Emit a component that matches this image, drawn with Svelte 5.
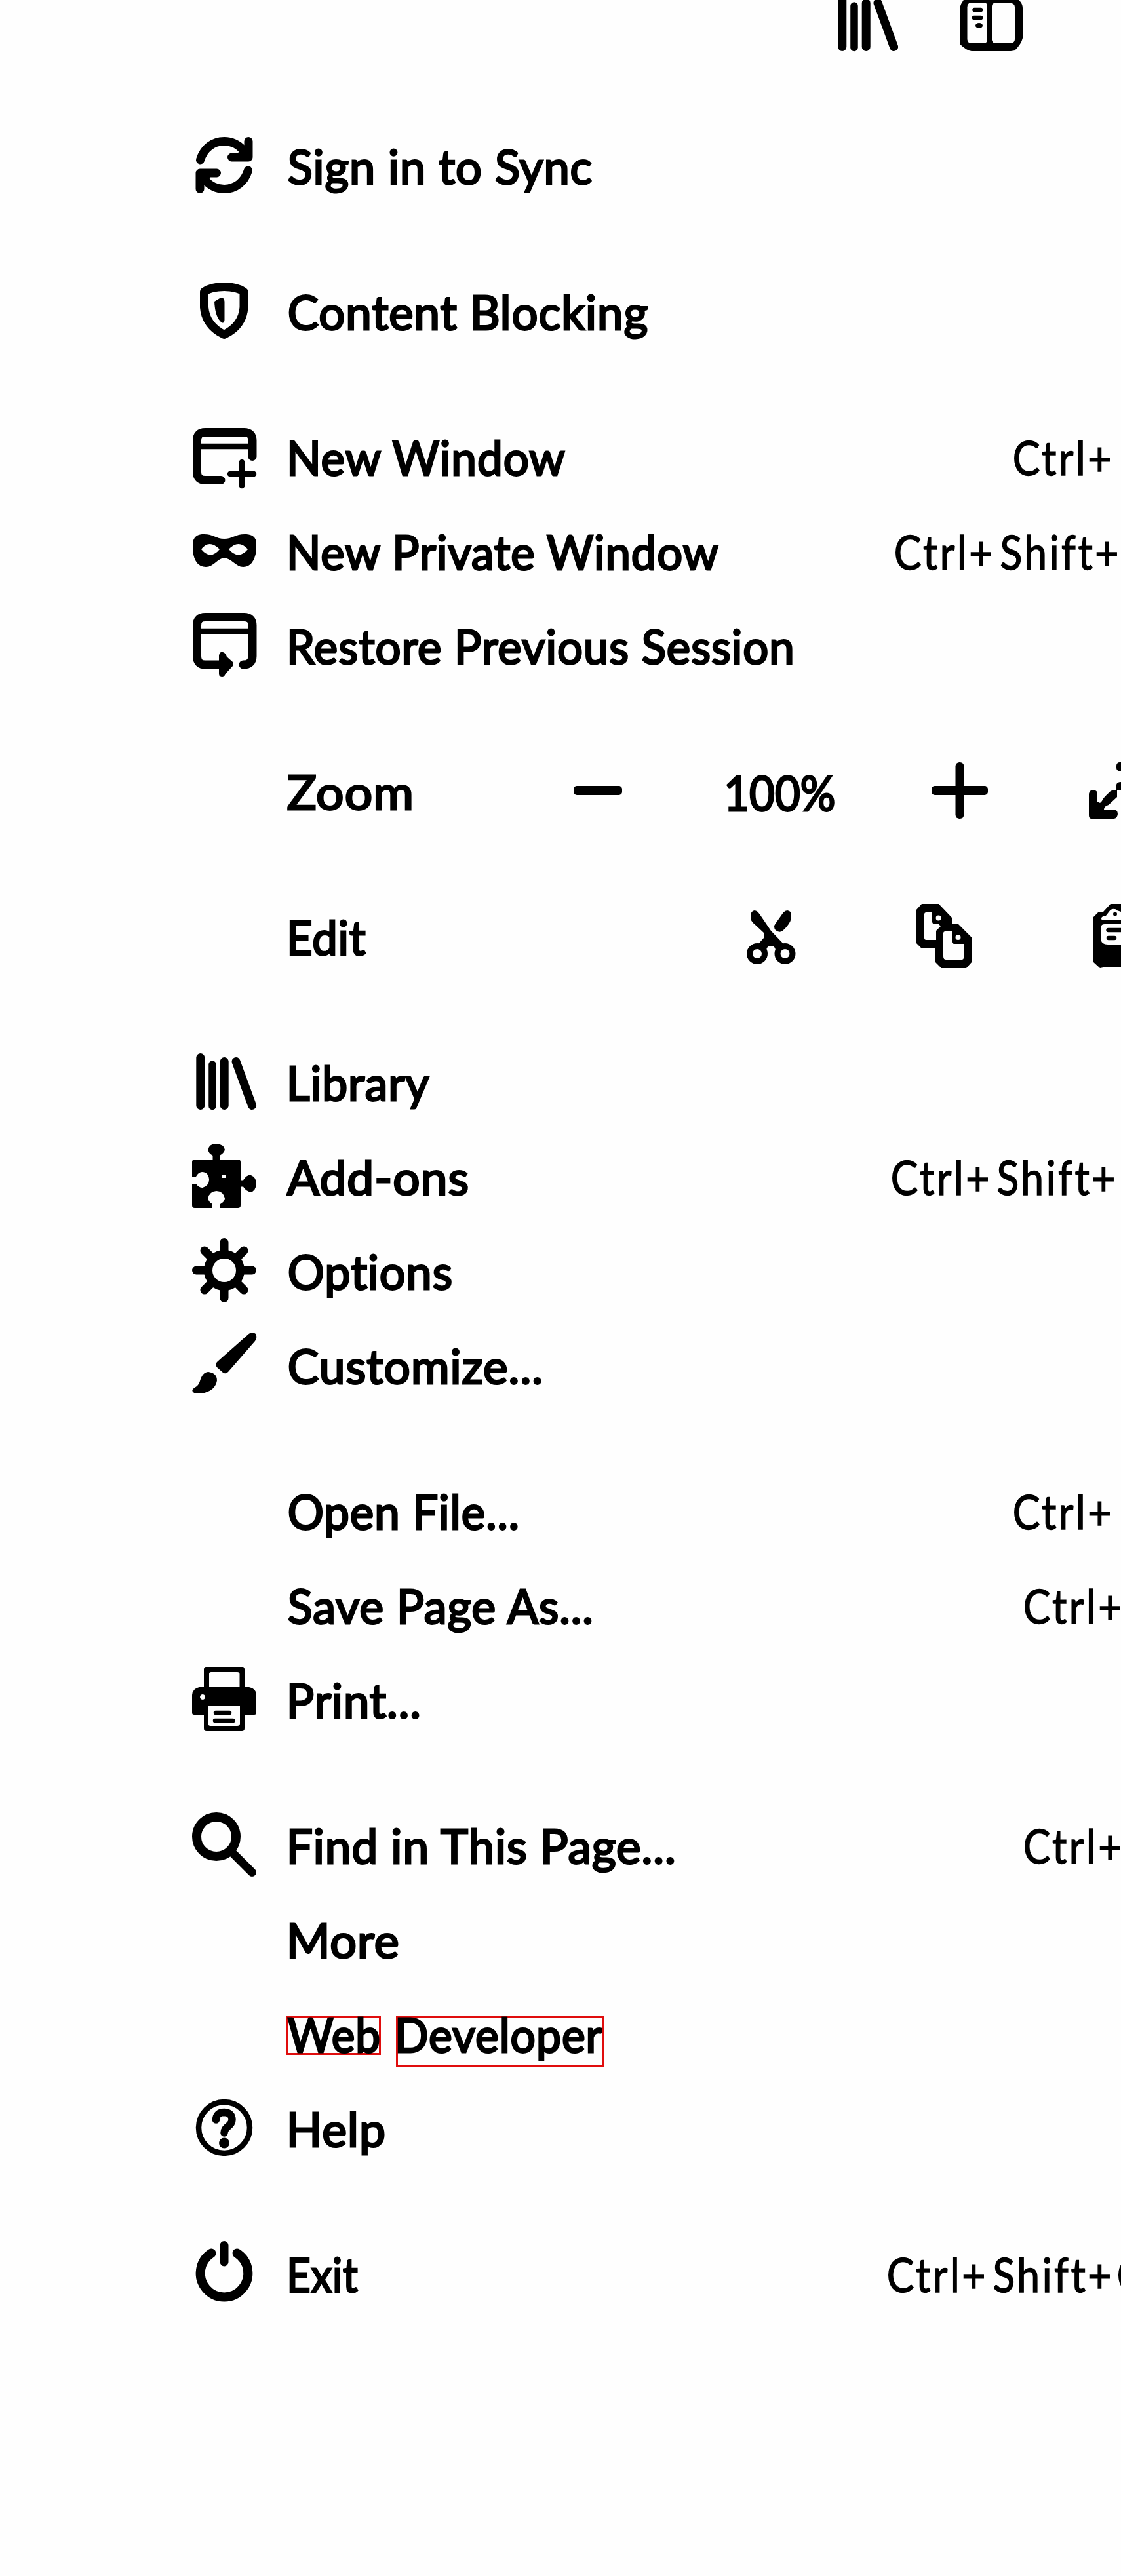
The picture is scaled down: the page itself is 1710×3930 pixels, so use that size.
<script>
  // Each entry: icon name, label, label ink span [start, end] and an optional
  // shortcut (list of { text, from, to }), all measured from the label column.
  const LABEL_X = 437;
  const span = (from, to) => [from - LABEL_X, to - LABEL_X];
  const ctrl = (x) => [{ text: 'Ctrl+', from: x, to: x + 146 }];
  const ctrlShift = (x) => [
    { text: 'Ctrl+', from: x, to: x + 146 },
    { text: 'Shift+', from: x + 161, to: x + 338 }
  ];

  const groups = [
    [{ icon: 'sync', label: 'Sign in to Sync', ink: span(440, 903) }],
    [{ icon: 'shield', label: 'Content Blocking', ink: span(441, 988) }],
    [
      { icon: 'window', label: 'New Window', ink: span(442, 864), keys: ctrl(1547) },
      { icon: 'mask', label: 'New Private Window', ink: span(442, 1098), keys: ctrlShift(1366) },
      { icon: 'restore', label: 'Restore Previous Session', ink: span(442, 1208) }
    ],
    [{ kind: 'zoom', label: 'Zoom', ink: span(438, 627) }],
    [{ kind: 'edit', label: 'Edit', ink: span(442, 558) }],
    [
      { icon: 'library', label: 'Library', ink: span(442, 655) },
      { icon: 'addons', label: 'Add-ons', ink: span(437, 713), keys: ctrlShift(1361) },
      { icon: 'options', label: 'Options', ink: span(441, 688) },
      { icon: 'brush', label: 'Customize...', ink: span(441, 825) }
    ],
    [
      { label: 'Open File...', ink: span(441, 789), keys: ctrl(1547) },
      { label: 'Save Page As...', ink: span(440, 904), keys: ctrl(1563) },
      { icon: 'print', label: 'Print...', ink: span(442, 639) }
    ],
    [
      { icon: 'find', label: 'Find in This Page...', ink: span(442, 1030), keys: ctrl(1563) },
      { label: 'More', ink: span(442, 607) },
      { kind: 'web', label: 'Web Developer' },
      { icon: 'help', label: 'Help', ink: span(442, 586) }
    ],
    [
      {
        icon: 'power',
        label: 'Exit',
        ink: span(442, 546),
        keys: [...ctrlShift(1355), { text: 'Q', from: 1706, to: 1752 }]
      }
    ]
  ];

  // Scales a text run horizontally so that its ink covers the given span.
  function fit(node, [from, to]) {
    const cs = getComputedStyle(node);
    const pen = parseFloat(cs.webkitTextStrokeWidth) || 0;
    const ctx = document.createElement('canvas').getContext('2d');
    ctx.font = `${cs.fontWeight} ${cs.fontSize} ${cs.fontFamily}`;
    ctx.letterSpacing = cs.letterSpacing === 'normal' ? '0px' : cs.letterSpacing;
    const m = ctx.measureText(node.textContent);
    const spacing = parseFloat(cs.letterSpacing) || 0;
    const left = -m.actualBoundingBoxLeft - pen / 4;
    // The advance carries one trailing letter space; the ink box does not.
    const right = Math.min(m.actualBoundingBoxRight, m.width - spacing) + pen / 4;
    const scale = (to - from) / (right - left);
    node.style.setProperty('--sx', scale);
    node.style.setProperty('--dx', `${from - left * scale}px`);
  }
</script>

{#snippet bars()}
  <g class="line w13"><path d="M11.8 11.5V84.5M48.2 17.5V84.5M66 17.5L90.6 84.5" /></g>
  <path class="line w11" d="M30 22V85.5" />
{/snippet}

{#snippet icon(name)}
  <svg class="icon" viewBox="0 0 96 96" aria-hidden="true">
    {#if name === 'sync'}
      {#each ['', 'rotate(180 48 48)'] as turn}
        <g transform={turn}>
          <path class="line w13" d="M11.500 40C17 22 31 11.500 48 11.500C60 11.500 69 16 77 25" />
          <path class="line w13" d="M85 11.500V36H59.500" />
          <path d="M84 12V40H64L71 26Z" />
        </g>
      {/each}
    {:else if name === 'shield'}
      <path class="line w13" d="M17.500 19Q28 11.500 48 11.500Q67 11.500 78 19V43Q76 71 48 84.500Q20 71 17.500 43Z" />
      <path d="M33 34L42 28.500Q48 27 48.500 34V62Q48 68 44 66Q34 58 33 34Z" />
    {:else if name === 'window'}
      <path class="line w13" d="M91 48.500V24Q91 11.500 78 11.500H19Q6.500 11.500 6.500 24V72Q6.500 84.500 19 84.500H43" />
      <path class="line w8" d="M9 33H89M57 75H93M75 57V93" />
    {:else if name === 'mask'}
      <path fill-rule="evenodd" d="M0 36Q2 24 14 23C31 22 35 30 48 30C61 30 66 22 82 23Q96 24 97 36V48Q93 73 77 73C66 73 59 59.500 48 59.500C38 59.500 32 73 20 73Q3 73 0 48ZM13 46Q25 30 41 46Q27 63 13 46ZM55 46Q70 30 84 46Q70 63 55 46Z" />
    {:else if name === 'restore'}
      <path class="line w13" d="M77 78Q91 78 91 65V18Q91 5.500 78 5.500H19Q6.500 5.500 6.500 18V65Q6.500 78 19 78H45" />
      <path class="line w8" d="M9 27H89" />
      <path d="M40 64Q41 58 46 59Q50 60 52 66L61 74V80L50 92Q48 97 45 97Q40 97 40 92Z" />
    {:else if name === 'library'}
      {@render bars()}
    {:else if name === 'addons'}
      <path d="M3 23H30.500V17Q23.500 13 23.500 8Q25 -1 36 -1Q48 0 49 8Q48 13 41 17V23H69Q73 23 73 27V54.500H77Q82 46.500 88 46.500Q97 50 97 60Q96 72 88 72.500Q82 72 77 64.500H73V93Q73 97 69 97H42V91Q49 87 49 82Q46 71 36 71Q25 72 23.500 82Q24 88 30 91V97H3Q-1 97 -1 93V60H5Q9 66 15 66Q25 63 25 53.500Q24 42 14 42Q8 43 5 49H-1V27Q-1 23 3 23Z" />
      <path class="paper" d="M45 46h5v5h-5z" />
    {:else if name === 'options'}
      <circle class="line w13" cx="48" cy="48" r="24.500" />
      {#each [0, 45, 90, 135, 180, 225, 270, 315] as angle}
        <path class="line w13" d="M48 20V5.500" transform="rotate({angle} 48 48)" />
      {/each}
    {:else if name === 'brush'}
      <path d="M85.500 1Q91 -3 96 1Q99 7 95 12L54 59Q50 63 46 60L37 52Q33 47 38 43Z" />
      <path d="M2 91Q-4 87 3 83Q9 80 11 73Q15 59 24 59Q37 61 37 72Q35 86 18 91Z" />
    {:else if name === 'print'}
      <path fill-rule="evenodd" d="M20-1H76Q79-1 79 3V30H86Q97 32 97 42V69Q97 72 94 72H79V93Q79 97 75 97H21Q17 97 17 93V72H2Q-1 72-1 69V42Q0 32 10 30H17V3Q17-1 20-1ZM28 7Q25 7 25 10V30H71.500V10Q71.500 7 68 7ZM23.500 59V86Q24 89 27 89H68Q71.500 89 72 86V59ZM15 41a4 4 0 1 0 .1 0Z" />
      <path class="line w6" d="M35 69H56M34 81H61.500" />
    {:else if name === 'find'}
      <circle class="line w14" cx="36" cy="36" r="30" />
      <path class="line w13" d="M62 62L90.500 90.500" />
    {:else if name === 'help'}
      <circle class="line w8" cx="48" cy="48" r="39" />
      <path class="line w11" d="M35.500 36Q36 24.500 48 24.500Q60 25 60 36C60 46 48 46 48 56" />
      <circle cx="48" cy="71.500" r="8" />
    {:else if name === 'power'}
      <path class="line w14" d="M28.500 17.500A36.300 36.300 0 1 0 67.500 17.500" />
      <path class="line w13" d="M48 5.500V31" />
    {/if}
  </svg>
{/snippet}

<main>
  <header>
    <svg class="icon" viewBox="0 0 96 96" aria-hidden="true">{@render bars()}</svg>
    <svg class="icon" viewBox="0 0 96 96" aria-hidden="true">
      <path
        fill-rule="evenodd"
        d="M18 5H78Q84 5 89 12Q96 18 96 25V71Q94 80 84 90L78 91H18Q10 90 0 80V25Q2 16 12 6ZM17 17Q11 18 11.500 25V73Q12 79 18 79H38Q42 78 42 73V22Q42 17 36 17ZM53 18Q49 18 49 23V74Q50 79 55 79H78Q84 78 84 73V24Q84 19 79 18Z"
      />
      <path class="line w6" d="M22.500 28H32M22 40H32" />
      <ellipse cx="29.500" cy="52" rx="5.500" ry="4" />
    </svg>
  </header>

  {#each groups as group}
    <section>
      {#each group as item}
        <div class="row">
          <div class="slot">
            {#if item.icon}{@render icon(item.icon)}{/if}
          </div>

          {#if item.kind === 'web'}
            <div class="boxes">
              <div class="box web"><span class="text" use:fit={[-1, 138]}>Web</span></div>
              <div class="box dev"><span class="text" use:fit={[0, 312]}>Developer</span></div>
            </div>
          {:else}
            <div class="label"><span class="text" use:fit={item.ink}>{item.label}</span></div>
          {/if}

          {#if item.kind === 'zoom'}
            <div class="zoom">
              <svg width="74" height="14" viewBox="0 0 74 14"><rect width="74" height="14" rx="5" /></svg>
              <div class="percent"><span class="text" use:fit={[0, 164]}>100%</span></div>
              <svg width="86" height="86" viewBox="0 0 86 86">
                <rect y="36" width="86" height="14" rx="5" />
                <rect x="36.500" width="13" height="86" rx="6" />
              </svg>
              <svg width="49" height="86" viewBox="0 0 49 86">
                <rect x="42" width="30" height="13.500" rx="5" />
                <path d="M42 43V34Q43 30 49 30V43Z" />
                <path d="M0 48Q1 42 7 42Q13 43 13 48V60L17 62L20 59Q21 55 32 45Q34 42 43 43V53L30 65Q23 67 23 72H39Q44 73 44 79Q43 86 38 86H4Q0 86 0 81Z" />
              </svg>
            </div>
          {:else if item.kind === 'edit'}
            <div class="edit">
              <svg width="75" height="82" viewBox="0 0 75 82">
                <circle class="line w9" cx="16" cy="66" r="11.500" />
                <circle class="line w9" cx="58.500" cy="66" r="11.500" />
                <path d="M6 11Q6 0 12 0Q16 0 20 6L37 31L57 52L44 60Q43 54 37 54Q31 54 30 60L18 51L26 42V34L12 21Q6 16 6 11Z" />
                <path d="M62 0Q68 1 68 6V12Q66 21 55 31Q50 35 44 30Q40 25 44 20L56 3Q59 0 62 0Z" />
              </svg>
              <svg width="88" height="98" viewBox="0 0 88 98">
                <path d="M10 0H36L56 21V31H66L87 52V88L78 98H40L31 89V68H10L1 59V10Z" />
                <path class="paper" d="M14 16Q14 13 17 13H26V27Q26 31 31 31H36L39 34L32 41V55H17Q14 55 14 52ZM43 45Q43 42 46 42H56V58Q56 61 60 61H74V82Q74 85 71 85H47Q43 85 43 80Z" />
                <circle class="paper" cx="35.600" cy="21.500" r="4" />
                <circle class="paper" cx="65.500" cy="51" r="4" />
              </svg>
              <svg width="43" height="98" viewBox="0 0 43 98">
                <path d="M0 21L9 12H16L27 0H43V97H16L11 98L0 88Z" />
                <path class="paper" d="M13 22Q13 19 20 18L27 9Q34 6 37 10L43 12V25H16Q13 25 13 22ZM12.500 35Q13 31 18 31H43V62H23Q13 62 12.500 54Z" />
                <circle cx="34" cy="15.500" r="3" />
                <path class="line w6" d="M23.500 40H50M24 52H33" />
              </svg>
            </div>
          {/if}

          {#if item.keys}
            <div class="keys">
              {#each item.keys as key, i}
                <span
                  class="key"
                  style:--w="{key.to - key.from}px"
                  style:--next="{key.from - (item.keys[i - 1]?.to ?? 1300)}px"
                  ><span class="text" use:fit={[0, key.to - key.from]}>{key.text}</span></span>
              {/each}
            </div>
          {/if}
        </div>
      {/each}
    </section>
  {/each}
</main>

<style>
  :global(body) {
    margin: 0;
    background: #fefefe;
  }

  main {
    width: 1710px;
    height: 3930px;
    overflow: hidden;
    background: #fefefe;
    color: #000;
    font: 400 71px/144px Lato, 'Noto Sans', sans-serif;
    font-variant-ligatures: none;
    white-space: nowrap;
  }

  header {
    display: flex;
    gap: 95px;
    height: 193px;
    margin-top: -13px;
    padding-left: 1273px;
  }

  section + section {
    margin-top: 78px;
  }

  .row {
    display: flex;
    align-items: center;
    height: 144px;
    padding-left: 294px;
  }

  .slot {
    flex: none;
    width: 143px;
    height: 96px;
  }

  svg {
    display: block;
    flex: none;
    fill: #000;
  }

  .icon {
    width: 96px;
    height: 96px;
    overflow: visible;
  }

  .line {
    fill: none;
    stroke: #000;
    stroke-linecap: round;
    stroke-linejoin: round;
  }

  .w6 { stroke-width: 6.5; }
  .w8 { stroke-width: 8.5; }
  .w9 { stroke-width: 9; }
  .w11 { stroke-width: 11.5; }
  .w13 { stroke-width: 13; }
  .w14 { stroke-width: 14; }
  .paper { fill: #fefefe; }

  .label {
    flex: none;
    width: 438px;
    height: 144px;
    padding-top: 2px;
    box-sizing: border-box;
  }

  .text {
    display: inline-block;
    letter-spacing: 1px;
    transform-origin: 0 50%;
    transform: translateX(var(--dx, 0)) scaleX(var(--sx, 1));
    -webkit-text-stroke: 3px #000;
    paint-order: stroke;
    stroke-linejoin: round;
  }

  .zoom {
    display: flex;
    align-items: center;
  }

  .percent {
    width: 164px;
    height: 144px;
    margin: 5px 148px 0 160px;
  }

  .percent .text {
    font-size: 74px;
    letter-spacing: 0;
  }

  .zoom svg:nth-of-type(3) {
    margin-left: 154px;
  }

  .edit {
    display: flex;
    align-items: center;
    margin-left: 264px;
  }

  .edit svg:nth-of-type(1) {
    margin: 4px 182px 0 0;
  }

  .edit svg:nth-of-type(2) {
    margin-right: 183px;
  }

  .keys {
    display: flex;
    height: 144px;
    padding-top: 2px;
    padding-left: 425px;
    box-sizing: border-box;
  }

  .key {
    flex: none;
    width: var(--w);
    margin-left: var(--next);
  }

  .key .text {
    letter-spacing: 4px;
    -webkit-text-stroke-width: 1.5px;
  }

  .boxes {
    display: flex;
    align-items: flex-start;
    gap: 23px;
    height: 52px;
  }

  .box {
    box-sizing: border-box;
    border: 3px solid #e00d0d;
    line-height: 49px;
  }

  .web {
    width: 144px;
    height: 59px;
  }

  .dev {
    width: 318px;
    height: 77px;
  }
</style>
